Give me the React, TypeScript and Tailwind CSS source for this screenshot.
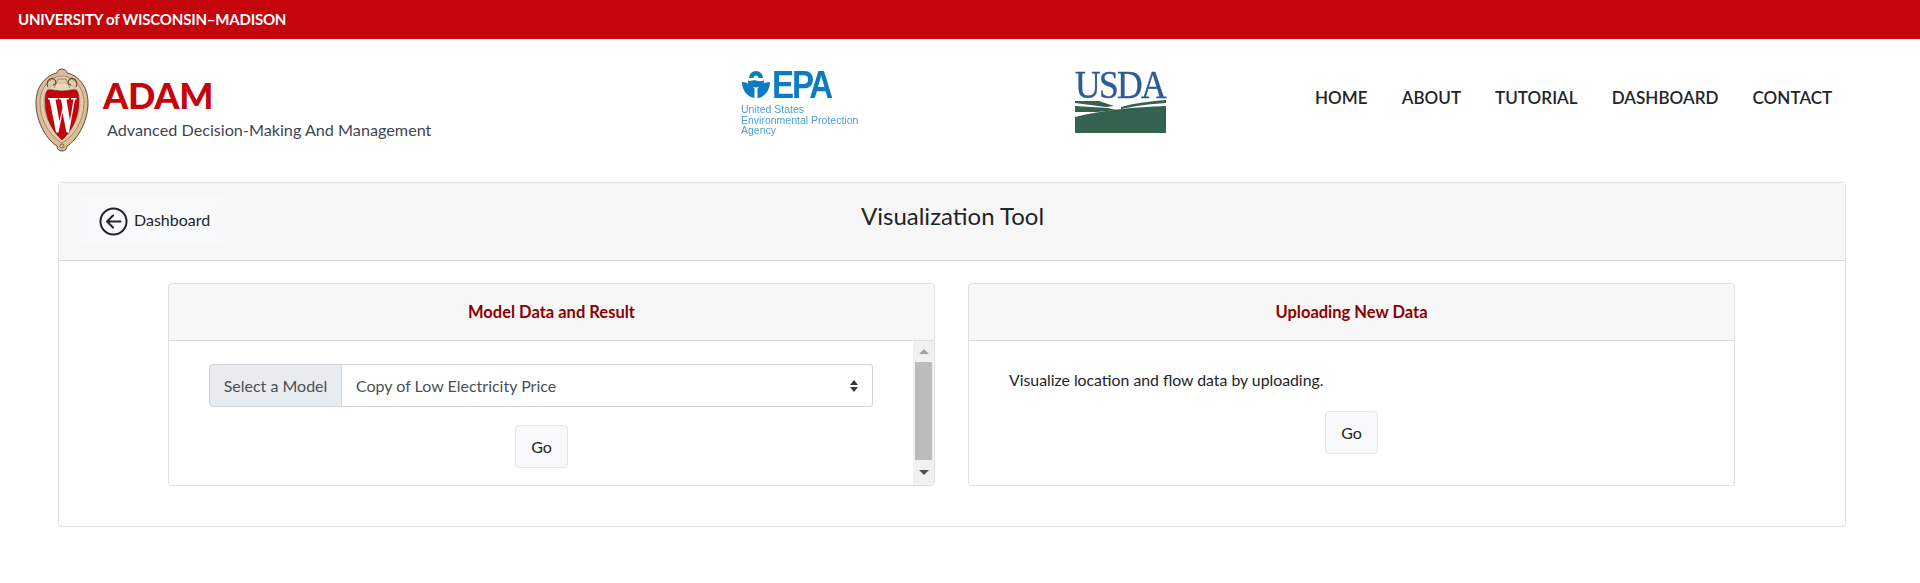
import React from "react";

function Crest() {
  return (
    <svg width="54" height="84" viewBox="0 0 54 84" className="shrink-0">
      <path d="M27 1c3 0 5 2 5 4 10 2 21 12 21 30 0 20-12 38-21 43 0 3-2 5-5 5s-5-2-5-5C13 73 1 55 1 35 1 17 12 7 22 5c0-2 2-4 5-4z" fill="#dcbb95" stroke="#5b4a3a" strokeWidth="1" />
      <path d="M27 8c9 0 22 9 22 27 0 18-11 34-22 40C16 69 5 53 5 35 5 17 18 8 27 8z" fill="#e6cbab" stroke="#8a7359" strokeWidth="0.7" />
      <path d="M27 15c7 0 18 4 18 20 0 15-9 28-18 37C18 63 9 50 9 35c0-16 11-20 18-20z" fill="#ecd8bf" stroke="#a08a70" strokeWidth="0.5" />
      <path d="M13 19c-3-6 3-10 6-8 3 2 2 6-1 6M41 19c3-6-3-10-6-8-3 2-2 6 1 6" fill="none" stroke="#5b4a3a" strokeWidth="1.1" />
      <path d="M19 20l4-9h8l4 9" fill="none" stroke="#7a6650" strokeWidth="0.7" />
      <circle cx="27" cy="78" r="2" fill="none" stroke="#5b4a3a" strokeWidth="0.7" />
      <path d="M27 23c5 0 10-2 14-1 2 1 3 5 3 12 0 16-8 30-17 38C18 64 10 50 10 34c0-7 1-11 3-12 4-1 9 1 14 1z" fill="#c5050c" stroke="#5a2a20" strokeWidth="0.6" />
      <path d="M13 30h10v1.500h-2.500l4 22 3-14-1.500-8h-2V30h10v1.500h-2.500l3.500 21 3.500-21h-2.500V30h5.500v1.500H40l-6 33h-2.500l-4-20-4 20H21l-6.500-33H13z" fill="#fff" />
    </svg>
  );
}

function EpaLogo() {
  return (
    <div className="w-[120px] blur-[0.3px]">
      <div className="flex h-[30px] items-center gap-[1px]">
        <svg width="30" height="28" viewBox="0 0 30 28" className="shrink-0">
          <path d="M8 7a7 7 0 0 1 14 0h-4.500a2.500 2.500 0 0 0-5 0z" fill="#0b7cc4" />
          <path d="M7 9.500c3 1.500 5-1 8 0s5 1 8 0v2a8 5 0 0 1-16 0z" fill="#0b7cc4" />
          <path d="M1 11c5 0 10 3 12.500 6.500V27C6 26 1 19 1 11zM29 11c-5 0-10 3-12.500 6.500V27C24 26 29 19 29 11z" fill="#0b7cc4" />
        </svg>
        <span className="origin-left scale-x-[0.87] font-['Liberation_Sans',sans-serif] text-[38px] leading-none font-bold tracking-[-2.500px] text-[#0b7cc4]">EPA</span>
      </div>
      <div className="mt-[4px] font-['Liberation_Sans',sans-serif] text-[10.500px] leading-[10.500px] text-[#4f9fd9]">
        <div>United States</div>
        <div className="whitespace-nowrap">Environmental Protection</div>
        <div>Agency</div>
      </div>
    </div>
  );
}

function UsdaLogo() {
  return (
    <div className="w-[91px] blur-[0.3px]">
      <div className="h-[30px] origin-left scale-x-[0.91] font-['Liberation_Serif',serif] text-[39px] leading-[30px] tracking-[-1.800px] whitespace-nowrap text-[#2c5b96] [-webkit-text-stroke:0.4px_#2c5b96]">USDA</div>
      <svg width="91" height="33" viewBox="0 0 91 33" className="block">
        <path d="M0 1h24l15 5-8 1L0 3zM0 6l33 2 8 2-18 2L0 12zM46 7C60 3 76 1 91 0v3C74 4 60 6 46 9z" fill="#35614f" />
        <path d="M0 17C28 10 60 7 91 6v27H0z" fill="#35614f" />
      </svg>
    </div>
  );
}

function BackIcon() {
  return (
    <svg width="29" height="29" viewBox="0 0 29 29" fill="none" stroke="#212529" strokeWidth="2" className="shrink-0">
      <circle cx="14.500" cy="14.500" r="13" />
      <path d="M21.500 14.500H8M14 8.500l-6 6 6 6" strokeLinecap="round" strokeLinejoin="round" />
    </svg>
  );
}

function GoButton({ className }: { className: string }) {
  return (
    <button className={"flex h-[43px] w-[53px] items-center justify-center rounded-[4px] border border-[#e3e6ea] bg-[#f8f9fa] text-[16px] text-[#212529] " + className}>
      Go
    </button>
  );
}

function CardHeader({ title }: { title: string }) {
  return (
    <div className="flex h-[57px] items-center justify-center rounded-t-[4px] border-b border-[#dcdcdc] bg-[#f7f7f7] text-[16.500px] font-bold text-[#8b0000]">
      {title}
    </div>
  );
}

function Scrollbar() {
  return (
    <div className="flex w-[21px] shrink-0 flex-col items-center bg-[#f1f1f1] px-[2px]">
      <div className="flex h-[21px] w-full items-center justify-center">
        <div className="h-0 w-0 border-x-[5px] border-b-[5px] border-x-transparent border-b-[#a3a3a3]" />
      </div>
      <div className="h-[98px] w-full bg-[#bcbcbc]" />
      <div className="flex h-[24px] w-full items-center justify-center">
        <div className="h-0 w-0 border-x-[5px] border-t-[5px] border-x-transparent border-t-[#505050]" />
      </div>
    </div>
  );
}

const navItems = ["HOME", "ABOUT", "TUTORIAL", "DASHBOARD", "CONTACT"];

export default function App() {
  return (
    <div className="min-h-[583px] bg-white font-['Lato',sans-serif] text-[#212529]">
      <div className="flex h-[39px] items-center bg-[#c5050c] pl-[18px] text-[15px] font-bold tracking-[-0.200px] text-white">
        UNIVERSITY of WISCONSIN–MADISON
      </div>

      <header className="flex h-[143px] pl-[35px]">
        <div className="flex w-[706px] shrink-0 pt-[29px]">
          <Crest />
          <div className="ml-[14px] pt-[8px]">
            <div className="text-[36px] leading-[38px] font-black tracking-[-0.300px] text-[#c5050c]">ADAM</div>
            <div className="mt-[6px] ml-[4px] text-[16.200px] leading-[20px] text-[#3e4650]">Advanced Decision-Making And Management</div>
          </div>
        </div>
        <div className="w-[334px] shrink-0 pt-[31px]">
          <EpaLogo />
        </div>
        <div className="w-[240px] shrink-0 pt-[31px]">
          <UsdaLogo />
        </div>
        <nav className="flex gap-[34px] pt-[49px] text-[17px] leading-[20px] font-semibold tracking-[0.050px] text-[#212529]">
          {navItems.map((n) => (
            <span key={n} className="whitespace-nowrap">{n}</span>
          ))}
        </nav>
      </header>

      <main className="mx-[58px] w-[1788px] rounded-[4px] border border-[#dfdfdf]">
        <div className="flex h-[78px] items-start border-b border-[#dcdcdc] bg-[#f7f7f7] pt-[14px] pl-[22px]">
          <div className="flex h-[48px] w-[142px] shrink-0 items-center gap-[6px] rounded-[4px] bg-[#f8f9fa] pl-[18px] text-[16px]">
            <BackIcon />
            <span className="-mt-[3px]">Dashboard</span>
          </div>
          <div className="ml-[638px] -mt-[1px] text-[24px] leading-[40px] whitespace-nowrap">Visualization Tool</div>
        </div>

        <div className="flex gap-[33px] pt-[22px] pb-[40px] pl-[109px]">
          <section className="flex h-[203px] w-[767px] flex-col overflow-hidden rounded-[4px] border border-[#dfdfdf]">
            <CardHeader title="Model Data and Result" />
            <div className="flex flex-1">
              <div className="flex-1">
                <div className="mt-[23px] ml-[40px] flex h-[43px] w-[664px] text-[16px]">
                  <div className="flex w-[133px] items-center justify-center rounded-l-[4px] border border-[#ced4da] bg-[#e9ecef] text-[#495057]">
                    Select a Model
                  </div>
                  <div className="flex flex-1 items-center justify-between rounded-r-[4px] border border-l-0 border-[#ced4da] pr-[13px] pl-[14px] text-[#495057]">
                    <span>Copy of Low Electricity Price</span>
                    <svg width="10" height="12" viewBox="0 0 10 12">
                      <path d="M5 0l4 5H1zM5 12L1 7h8z" fill="#343a40" />
                    </svg>
                  </div>
                </div>
                <GoButton className="mt-[18px] ml-[346px]" />
              </div>
              <Scrollbar />
            </div>
          </section>

          <section className="flex h-[203px] w-[767px] flex-col overflow-hidden rounded-[4px] border border-[#dfdfdf]">
            <CardHeader title="Uploading New Data" />
            <div className="flex-1">
              <p className="mt-[27px] ml-[40px] text-[15.800px] leading-[24px]">Visualize location and flow data by uploading.</p>
              <GoButton className="mt-[19px] ml-[356px]" />
            </div>
          </section>
        </div>
      </main>
    </div>
  );
}
